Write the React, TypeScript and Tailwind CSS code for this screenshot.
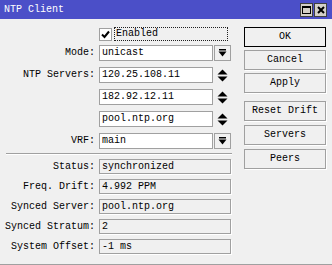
import React from "react";

const font = { fontFamily: '"Liberation Mono", "DejaVu Sans Mono", monospace' };

function DropBtn() {
  return (
    <div className="w-[17px] h-[16px] ml-[1px] border border-[#a0a0a0] bg-[#f0f0f0] flex items-center justify-center">
      <svg width="9" height="8" viewBox="0 0 9 8">
        <rect x="1" y="0" width="7" height="1.5" fill="#000" />
        <polygon points="0.5,2.5 8.5,2.5 4.5,7.5" fill="#000" />
      </svg>
    </div>
  );
}

function Spinner() {
  return (
    <div className="w-[17px] h-[16px] ml-[1px] flex items-center justify-center">
      <svg width="11" height="13" viewBox="0 0 11 13">
        <polygon points="5.5,0.5 10.5,5.5 0.5,5.5" fill="#000" />
        <polygon points="0.5,7.5 10.5,7.5 5.5,12.5" fill="#000" />
      </svg>
    </div>
  );
}

function EditRow({ label, value, kind, mt }: { label?: string; value: string; kind: "drop" | "spin"; mt: string }) {
  return (
    <div className={`flex items-center h-[16px] ${mt}`}>
      <div className="w-[96px] text-right whitespace-pre pr-[1px]">{label ?? ""}</div>
      <div className="ml-[3px] w-[114px] h-[16px] bg-white border border-[#a0a0a0] flex items-center pl-[2px] whitespace-pre">
        {value}
      </div>
      {kind === "drop" ? <DropBtn /> : <Spinner />}
    </div>
  );
}

function ReadRow({ label, value, mt }: { label: string; value: string; mt: string }) {
  return (
    <div className={`flex items-center h-[15px] ${mt}`}>
      <div className="w-[96px] text-right whitespace-pre pr-[1px]">{label}</div>
      <div className="ml-[3px] w-[132px] h-[15px] border border-[#a0a0a0] shadow-[1px_1px_0_#ffffff] flex items-center pl-[2px] whitespace-pre">
        {value}
      </div>
    </div>
  );
}

function Btn({ label, primary, mt }: { label: string; primary?: boolean; mt: string }) {
  return (
    <div
      className={`w-[82px] h-[20px] flex items-center justify-center bg-[#f0f0f0] ${mt} ${
        primary ? "border border-black" : "border border-[#a0a0a0] shadow-[1px_1px_0_#ffffff]"
      }`}
    >
      {label}
    </div>
  );
}

export default function App() {
  return (
    <div className="w-[332px] h-[265px] bg-[#f0f0f0] text-[10px] leading-none text-black flex flex-col" style={font}>
      <div className="h-[19px] bg-[#4b4fc8] flex items-center pl-[4px] pr-[5px]">
        <span className="text-white flex-1 whitespace-pre">NTP Client</span>
        <div className="w-[13px] h-[14px] bg-[#d4d0c8] border border-[#404040] flex items-center justify-center">
          <div className="w-[9px] h-[8px] border border-black border-t-2" />
        </div>
        <div className="w-[13px] h-[14px] ml-[1px] bg-[#d4d0c8] border border-[#404040] flex items-center justify-center">
          <svg width="8" height="8" viewBox="0 0 8 8">
            <path d="M1 1 L7 7 M7 1 L1 7" stroke="#000" strokeWidth="2" />
          </svg>
        </div>
      </div>
      <div className="flex flex-1 border-b border-[#a0a0a0]">
        <div className="w-[244px] flex flex-col">
          <div className="flex items-center h-[14px] mt-[8px] ml-[99px]">
            <div className="w-[13px] h-[13px] bg-white border border-[#a0a0a0] flex items-center justify-center">
              <svg width="9" height="9" viewBox="0 0 9 9">
                <path d="M1 4.5 L3.5 7 L8 1.5" stroke="#000" strokeWidth="2" fill="none" />
              </svg>
            </div>
            <div className="ml-[2px] w-[114px] h-[14px] border border-dotted border-[#202020] flex items-center pl-[1px]">
              Enabled
            </div>
          </div>
          <EditRow label="Mode:" value="unicast" kind="drop" mt="mt-[4px]" />
          <EditRow label="NTP Servers:" value="120.25.108.11" kind="spin" mt="mt-[6px]" />
          <EditRow value="182.92.12.11" kind="spin" mt="mt-[6px]" />
          <EditRow value="pool.ntp.org" kind="spin" mt="mt-[6px]" />
          <EditRow label="VRF:" value="main" kind="drop" mt="mt-[6px]" />
          <div className="ml-[6px] w-[226px] h-[2px] mt-[4px] border-t border-[#a0a0a0] border-b border-b-white" />
          <ReadRow label="Status:" value="synchronized" mt="mt-[4px]" />
          <ReadRow label="Freq. Drift:" value="4.992 PPM" mt="mt-[5px]" />
          <ReadRow label="Synced Server:" value="pool.ntp.org" mt="mt-[5px]" />
          <ReadRow label="Synced Stratum:" value="2" mt="mt-[5px]" />
          <ReadRow label="System Offset:" value="-1 ms" mt="mt-[5px]" />
        </div>
        <div className="flex flex-col">
          <Btn label="OK" primary mt="mt-[8px]" />
          <Btn label="Cancel" mt="mt-[3px]" />
          <Btn label="Apply" mt="mt-[3px]" />
          <Btn label="Reset Drift" mt="mt-[8px]" />
          <Btn label="Servers" mt="mt-[4px]" />
          <Btn label="Peers" mt="mt-[4px]" />
        </div>
      </div>
    </div>
  );
}
